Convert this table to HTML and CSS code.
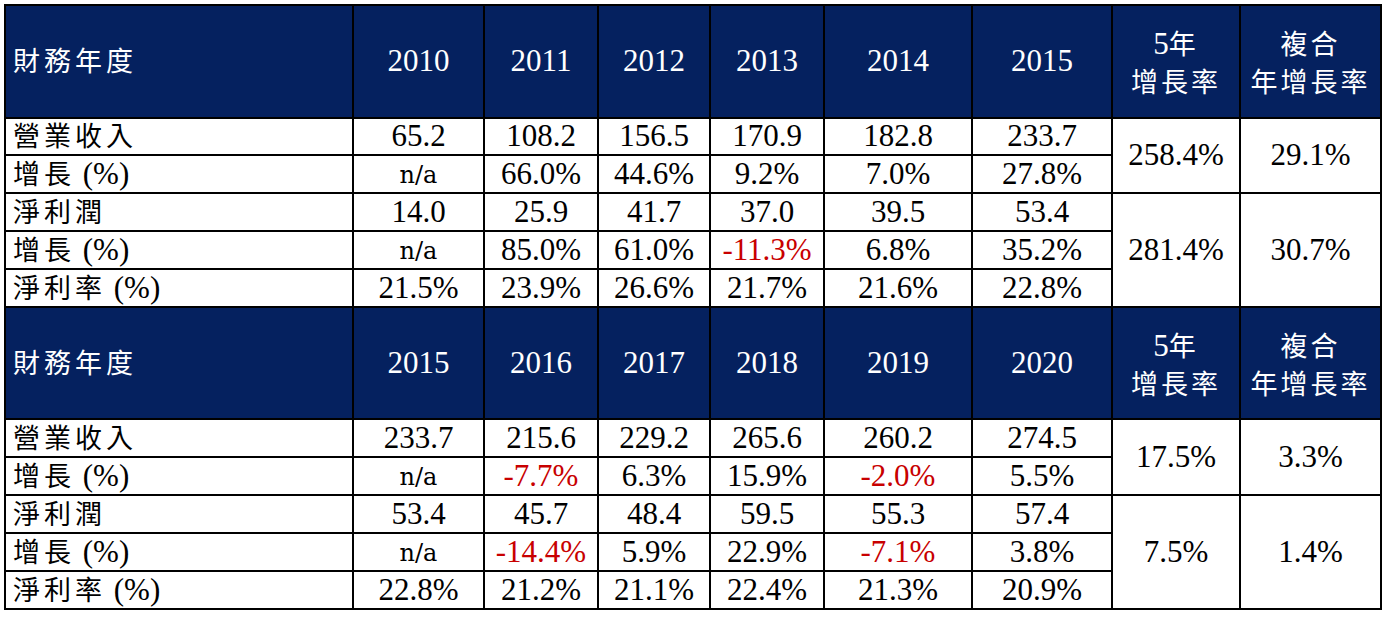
FILE: index.html
```html
<!DOCTYPE html>
<html lang="zh-Hant">
<head>
<meta charset="utf-8">
<title>財務年度</title>
<link rel="stylesheet" href="styles.css">
</head>
<body>
<table class="fin">
  <colgroup>
    <col class="c-label"><col class="c-a"><col class="c-b"><col class="c-c"><col class="c-d"><col class="c-e"><col class="c-f"><col class="c-g"><col class="c-h">
  </colgroup>
  <tbody>
    <tr class="head">
      <th class="label"><span class="zh">財務年度</span></th>
      <th>2010</th><th>2011</th><th>2012</th><th>2013</th><th>2014</th><th>2015</th>
      <th class="two">5<span class="zh">年</span><br><span class="zh">增長率</span></th>
      <th class="two"><span class="zh">複合</span><br><span class="zh">年增長率</span></th>
    </tr>
    <tr>
      <td class="label"><span class="zh">營業收入</span></td>
      <td>65.2</td><td>108.2</td><td>156.5</td><td>170.9</td><td>182.8</td><td>233.7</td>
      <td rowspan="2">258.4%</td><td rowspan="2">29.1%</td>
    </tr>
    <tr>
      <td class="label"><span class="zh">增長</span> (%)</td>
      <td><span class="na">n/a</span></td><td>66.0%</td><td>44.6%</td><td>9.2%</td><td>7.0%</td><td>27.8%</td>
    </tr>
    <tr>
      <td class="label"><span class="zh">淨利潤</span></td>
      <td>14.0</td><td>25.9</td><td>41.7</td><td>37.0</td><td>39.5</td><td>53.4</td>
      <td rowspan="3">281.4%</td><td rowspan="3">30.7%</td>
    </tr>
    <tr>
      <td class="label"><span class="zh">增長</span> (%)</td>
      <td><span class="na">n/a</span></td><td>85.0%</td><td>61.0%</td><td class="neg">-11.3%</td><td>6.8%</td><td>35.2%</td>
    </tr>
    <tr>
      <td class="label"><span class="zh">淨利率</span> (%)</td>
      <td>21.5%</td><td>23.9%</td><td>26.6%</td><td>21.7%</td><td>21.6%</td><td>22.8%</td>
    </tr>

    <tr class="head">
      <th class="label"><span class="zh">財務年度</span></th>
      <th>2015</th><th>2016</th><th>2017</th><th>2018</th><th>2019</th><th>2020</th>
      <th class="two">5<span class="zh">年</span><br><span class="zh">增長率</span></th>
      <th class="two"><span class="zh">複合</span><br><span class="zh">年增長率</span></th>
    </tr>
    <tr>
      <td class="label"><span class="zh">營業收入</span></td>
      <td>233.7</td><td>215.6</td><td>229.2</td><td>265.6</td><td>260.2</td><td>274.5</td>
      <td rowspan="2">17.5%</td><td rowspan="2">3.3%</td>
    </tr>
    <tr>
      <td class="label"><span class="zh">增長</span> (%)</td>
      <td><span class="na">n/a</span></td><td class="neg">-7.7%</td><td>6.3%</td><td>15.9%</td><td class="neg">-2.0%</td><td>5.5%</td>
    </tr>
    <tr>
      <td class="label"><span class="zh">淨利潤</span></td>
      <td>53.4</td><td>45.7</td><td>48.4</td><td>59.5</td><td>55.3</td><td>57.4</td>
      <td rowspan="3">7.5%</td><td rowspan="3">1.4%</td>
    </tr>
    <tr>
      <td class="label"><span class="zh">增長</span> (%)</td>
      <td><span class="na">n/a</span></td><td class="neg">-14.4%</td><td>5.9%</td><td>22.9%</td><td class="neg">-7.1%</td><td>3.8%</td>
    </tr>
    <tr>
      <td class="label"><span class="zh">淨利率</span> (%)</td>
      <td>22.8%</td><td>21.2%</td><td>21.1%</td><td>22.4%</td><td>21.3%</td><td>20.9%</td>
    </tr>
  </tbody>
</table>
</body>
</html>
```

FILE: styles.css
```css
html, body {
  margin: 0;
  padding: 0;
  background: #ffffff;
}

body {
  padding: 4px 0 0 4px;
}

.fin {
  border-collapse: collapse;
  table-layout: fixed;
  width: 1376px;
  font-family: "Liberation Serif", "Noto Sans CJK TC", serif;
  font-size: 31px;
  color: #000000;
  border: 2px solid #000000;
}

.c-label { width: 348px; }
.c-a { width: 131px; }
.c-b { width: 114px; }
.c-c { width: 112px; }
.c-d { width: 114px; }
.c-e { width: 148px; }
.c-f { width: 140px; }
.c-g { width: 128px; }
.c-h { width: 141px; }

.fin th,
.fin td {
  border: 2px solid #000000;
  padding: 0;
  text-align: center;
  vertical-align: middle;
  line-height: 34px;
  white-space: nowrap;
}

.fin tr {
  height: 37.8px;
}

.fin tr.head {
  height: 112.5px;
}

.fin th {
  background: #05215f;
  color: #ffffff;
  font-weight: 400;
}

.fin th.two {
  line-height: 38px;
  padding-top: 4px;
}

.fin .label {
  text-align: left;
  padding-left: 7px;
}

.zh {
  font-family: "Noto Sans CJK TC", sans-serif;
  font-size: 27px;
  line-height: 30px;
  font-weight: 400;
  letter-spacing: 4px;
}

.fin th.two .zh {
  letter-spacing: 3px;
}

.fin td.neg {
  color: #c80000;
}

.na {
  font-family: "DejaVu Serif", serif;
  font-size: 24px;
}
```
